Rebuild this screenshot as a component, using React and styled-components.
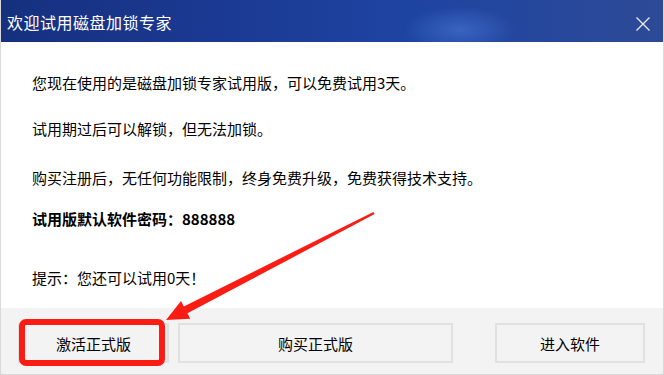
import React from 'react'
import styled, { createGlobalStyle } from 'styled-components'

const Global = createGlobalStyle`
    html, body {
        margin: 0;
        padding: 0;
        background: #ffffff;
    }
    body {
        font-family: "Noto Sans CJK SC", "Noto Sans", sans-serif;
    }
`

const Window = styled.div`
    position: relative;
    width: 664px;
    height: 375px;
    display: flex;
    flex-direction: column;
    box-sizing: border-box;
    border-left: 1px solid #d9d9d9;
    border-right: 1px solid #d9d9d9;
    border-bottom: 1px solid #d9d9d9;
    overflow: hidden;
`

// title bar
const TitleBar = styled.div`
    height: 42px;
    flex-shrink: 0;
    display: flex;
    align-items: center;
    justify-content: space-between;
    padding: 0 14px 0 7px;
    margin: 0 -1px;
    background:
        radial-gradient(ellipse 80px 34px at 460px 30px, rgba(80, 130, 225, 0.5), rgba(80, 130, 225, 0) 70%),
        linear-gradient(90deg, #16307f 0%, #1b3a93 35%, #1e44a2 62%, #2d4a96 100%);
`

const Title = styled.div`
    color: #ffffff;
    font-size: 16px;
    letter-spacing: 0.5px;
    padding-top: 2px;
`

const CloseButton = styled.div`
    width: 14px;
    height: 14px;
    display: flex;
    cursor: pointer;
    margin-top: 6px;
`

// body
const Body = styled.div`
    flex: 1;
    padding: 0 0 0 31px;
    background: #ffffff;
    color: #000000;
    font-size: 15px;
`

const Line = styled.p`
    margin: 0;
    margin-top: ${props => props.gap}px;
    line-height: 20px;
    font-weight: ${props => (props.bold ? 700 : 400)};
`

// footer
const Footer = styled.div`
    height: 66px;
    flex-shrink: 0;
    background: #f3f3f3;
    display: flex;
    align-items: flex-start;
    padding: 15px 0 0 17px;
    box-sizing: border-box;
`

const Button = styled.button`
    width: ${props => props.w}px;
    height: 40px;
    margin-left: ${props => props.ml}px;
    background: #f3f3f3;
    border: 2px solid #e1e1e1;
    font-family: inherit;
    font-size: 15px;
    color: #000000;
    cursor: pointer;
    padding: 0;
`

const Annotation = styled.svg`
    position: absolute;
    left: 0;
    top: 0;
    pointer-events: none;
`

const App = () => {
    return (
        <>
            <Global />
            <Window>
                <TitleBar>
                    <Title>欢迎试用磁盘加锁专家</Title>
                    <CloseButton>
                        <svg width="14" height="14" viewBox="0 0 14 14">
                            <path d="M0.5 0.5 L13.5 13.5 M13.5 0.5 L0.5 13.5" stroke="#e8ecf5" strokeWidth="1.3" />
                        </svg>
                    </CloseButton>
                </TitleBar>

                <Body>
                    <Line gap={31}>您现在使用的是磁盘加锁专家试用版，可以免费试用3天。</Line>
                    <Line gap={26}>试用期过后可以解锁，但无法加锁。</Line>
                    <Line gap={29}>购买注册后，无任何功能限制，终身免费升级，免费获得技术支持。</Line>
                    <Line gap={21} bold>试用版默认软件密码：888888</Line>
                    <Line gap={39}>提示：您还可以试用0天！</Line>
                </Body>

                <Footer>
                    <Button w={151} ml={0}>激活正式版</Button>
                    <Button w={275} ml={9}>购买正式版</Button>
                    <Button w={150} ml={42}>进入软件</Button>
                </Footer>

                <Annotation width="664" height="375" viewBox="0 0 664 375">
                    <rect x="21" y="322" width="140" height="41" rx="4" fill="none" stroke="#fb1c14" strokeWidth="6" />
                    <polygon
                        points="373.6,214.1 186.4,313.3 189.2,318.8 165,320 180,301 182.8,306.5 372.4,211.9"
                        fill="#fb1c14"
                    />
                </Annotation>
            </Window>
        </>
    )
}

export default App
